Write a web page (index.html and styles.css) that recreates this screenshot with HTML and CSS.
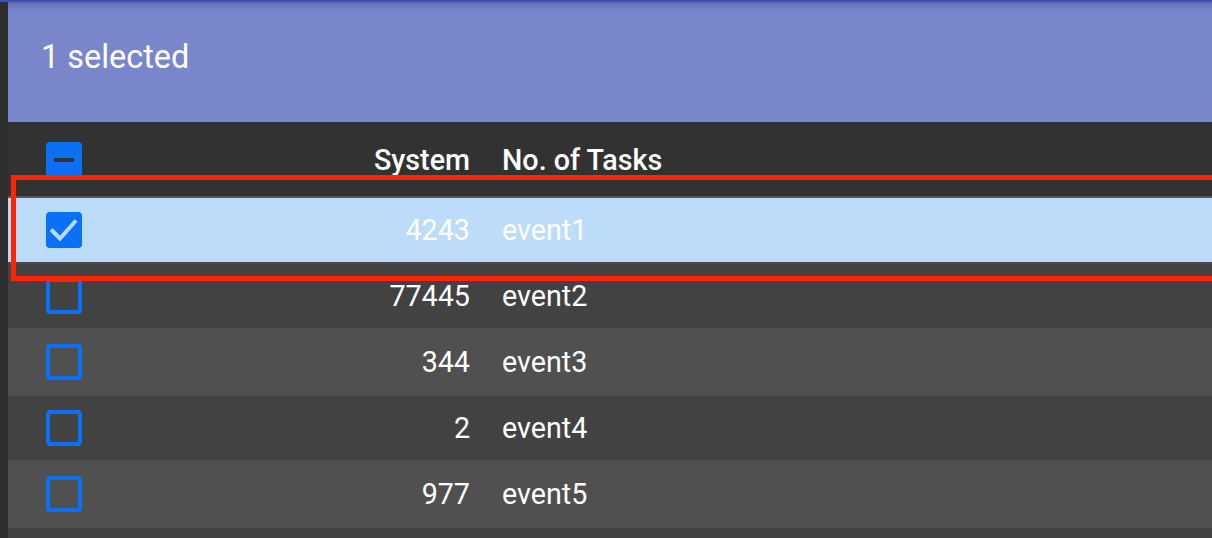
FILE: index.html
```html
<!DOCTYPE html>
<html>
<head>
<meta charset="utf-8">
<link rel="stylesheet" href="styles.css">
</head>
<body>
<div class="topline"></div>
<div class="app">
  <div class="strip"></div>
  <div class="main">
    <header class="appbar"><span class="title">1 selected</span></header>
    <div class="table">
      <div class="row head">
        <div class="cell check"><span class="box filled"><span class="dash"></span></span></div>
        <div class="cell num">System</div>
        <div class="cell name">No. of Tasks</div>
      </div>
      <div class="row selected tall">
        <div class="cell check"><span class="box filled"><svg width="36" height="36" viewBox="0 0 36 36"><path d="M5 17.5 L14 26.5 L30 8.5" fill="none" stroke="#bcd9f8" stroke-width="4"/></svg></span></div>
        <div class="cell num">4243</div>
        <div class="cell name">event1</div>
      </div>
      <div class="row dark">
        <div class="cell check"><span class="box"></span></div>
        <div class="cell num">77445</div>
        <div class="cell name">event2</div>
      </div>
      <div class="row light tall">
        <div class="cell check"><span class="box"></span></div>
        <div class="cell num">344</div>
        <div class="cell name">event3</div>
      </div>
      <div class="row dark">
        <div class="cell check"><span class="box"></span></div>
        <div class="cell num">2</div>
        <div class="cell name">event4</div>
      </div>
      <div class="row light tall">
        <div class="cell check"><span class="box"></span></div>
        <div class="cell num">977</div>
        <div class="cell name">event5</div>
      </div>
      <div class="row dark rest"></div>
    </div>
  </div>
</div>
<div class="highlight"></div>
</body>
</html>
```

FILE: styles.css
```css
html, body {
  margin: 0;
  padding: 0;
  width: 1212px;
  height: 538px;
  overflow: hidden;
  background: #424242;
  font-family: Roboto, "Noto Sans", sans-serif;
  color: #fff;
}
.topline {
  height: 2px;
  background: #3f4fb3;
}
.app {
  display: flex;
  height: 536px;
}
.strip {
  width: 8px;
  flex: none;
  background: #2e2e2e;
}
.main {
  flex: 1;
  display: flex;
  flex-direction: column;
  min-width: 0;
}
.appbar {
  height: 120px;
  flex: none;
  background: linear-gradient(to bottom, #5e68a8 0px, #717dc2 5px, #7886ca 10px, #7986cb 14px);
  padding: 36px 0 0 33px;
  box-sizing: border-box;
}
.title {
  font-size: 32.4px;
  font-weight: 400;
  line-height: 38px;
  display: block;
}
.table {
  flex: 1;
  display: flex;
  flex-direction: column;
  background: #424242;
  min-height: 0;
}
.row {
  display: flex;
  align-items: center;
  height: 64px;
  flex: none;
  font-size: 28.7px;
}
.row.tall { height: 68px; }
.row.rest { flex: 1; height: auto; min-height: 0; }
.row.head {
  height: 74px;
  background: #323232;
  font-weight: 500;
  padding-top: 2px;
  box-sizing: border-box;
}
.row.selected {
  background: #bddcfa;
  border-top: 2px solid #595959;
  border-bottom: 2px solid #4a4a4a;
  box-sizing: border-box;
}
.row.dark { background: #424242; }
.row.light { background: #505050; }
.cell.check {
  width: 74px;
  padding-left: 38px;
  box-sizing: border-box;
  display: flex;
  align-items: center;
  flex: none;
}
.cell.num {
  width: 388px;
  text-align: right;
  flex: none;
}
.cell.name {
  padding-left: 32px;
}
.box {
  width: 36px;
  height: 36px;
  box-sizing: border-box;
  border: 4px solid #0a70f7;
  border-radius: 4px;
  display: flex;
  align-items: center;
  justify-content: center;
}
.box.filled {
  background: #0a70f7;
  border: none;
}
.box svg { display: block; }
.dash {
  width: 20px;
  height: 4px;
  background: #333333;
}
.highlight {
  position: absolute;
  left: 11px;
  top: 175px;
  width: 1230px;
  height: 106px;
  border: 5px solid #ff2500;
  box-sizing: border-box;
}
```
